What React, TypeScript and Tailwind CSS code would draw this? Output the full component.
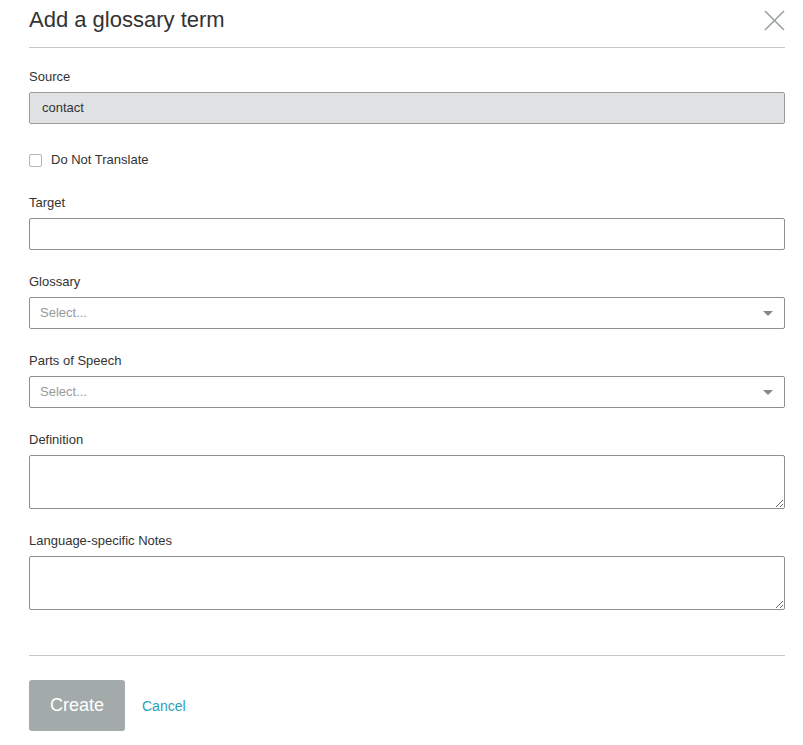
import { useState } from 'react';

const font = { fontFamily: '"Liberation Sans", Arial, sans-serif' };

function Field({ label, children }: { label: string; children: React.ReactNode }) {
  return (
    <div className="mb-[23px]">
      <label className="block text-[13px] leading-[18px] text-[#333] mb-[6px]">{label}</label>
      {children}
    </div>
  );
}

function SelectBox() {
  return (
    <div className="relative h-8 w-full border border-[#8f8f8f] rounded-[2px] bg-white flex items-center pl-[10px]">
      <span className="text-[13px] text-[#999]">Select...</span>
      <span className="absolute right-[11px] top-[13px] w-0 h-0 border-l-[5px] border-r-[5px] border-t-[5px] border-l-transparent border-r-transparent border-t-[#888]" />
    </div>
  );
}

export default function App() {
  const [dnt, setDnt] = useState(false);
  return (
    <div className="w-[803px] h-[745px] bg-white px-[29px] pr-[18px]" style={font}>
      <div className="flex items-center justify-between h-[48px] border-b border-[#c8c8c8]">
        <h1 className="text-[22px] text-[#333] leading-none pb-[8px]">Add a glossary term</h1>
        <button className="text-[#9aa0a0] pb-[7px]" aria-label="Close">
          <svg width="21" height="21" viewBox="0 0 21 21" stroke="currentColor" strokeWidth="1.6" fill="none">
            <path d="M1 1 L20 20 M20 1 L1 20" />
          </svg>
        </button>
      </div>

      <div className="pt-[20px] pb-px">
        <div className="mb-[30px]">
          <label className="block text-[13px] leading-[18px] text-[#333] mb-[6px]">Source</label>
          <div className="h-8 w-full border border-[#9a9a9a] rounded-[2px] bg-[#e1e2e4] flex items-center pl-[12px] text-[13px] text-[#333]">
            contact
          </div>
        </div>

        <label className="flex items-center gap-[9px] h-[12px] mb-[28px] cursor-pointer">
          <input
            type="checkbox"
            checked={dnt}
            onChange={(e) => setDnt(e.target.checked)}
            className="appearance-none w-[13px] h-[13px] border border-[#b5b5b5] rounded-[2px] bg-white"
          />
          <span className="text-[13px] text-[#333]">Do Not Translate</span>
        </label>

        <Field label="Target">
          <input className="block h-8 w-full border border-[#8f8f8f] rounded-[2px] bg-white outline-none px-[10px] text-[13px]" />
        </Field>
        <Field label="Glossary">
          <SelectBox />
        </Field>
        <Field label="Parts of Speech">
          <SelectBox />
        </Field>
        <Field label="Definition">
          <textarea className="block h-[54px] w-full border border-[#8f8f8f] rounded-[2px] bg-white outline-none p-[8px] text-[13px]" />
        </Field>
        <div>
          <label className="block text-[13px] leading-[18px] text-[#333] mb-[6px]">Language-specific Notes</label>
          <textarea className="block h-[54px] w-full border border-[#8f8f8f] rounded-[2px] bg-white outline-none p-[8px] text-[13px]" />
        </div>
      </div>

      <div className="mt-[44px] border-t border-[#c8c8c8] pt-[24px] flex items-center gap-[17px]">
        <button className="w-[96px] h-[51px] rounded-[3px] bg-[#a3abaa] text-white text-[18px]">Create</button>
        <button className="text-[14px] text-[#2a9fbd] pt-[2px]">Cancel</button>
      </div>
    </div>
  );
}
